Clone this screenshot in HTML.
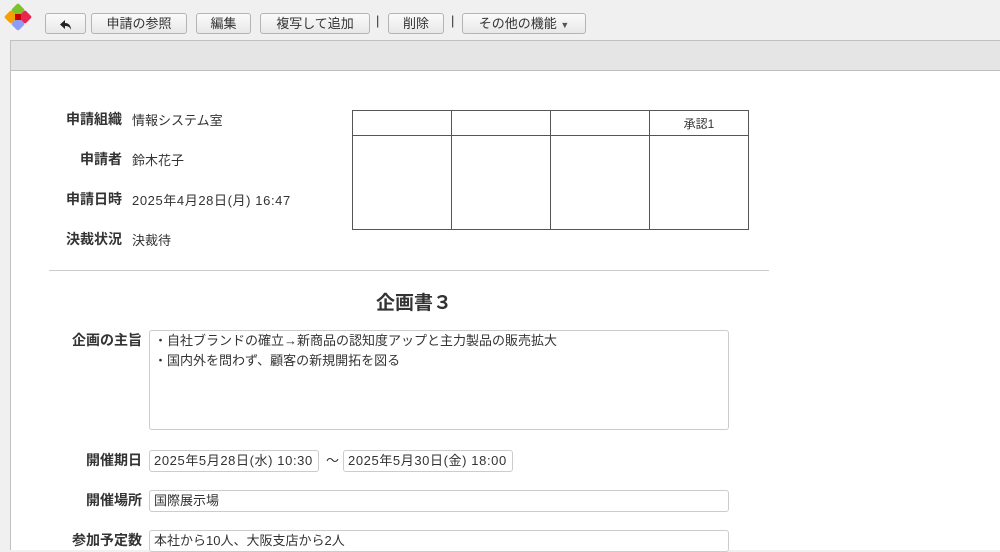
<!DOCTYPE html>
<html><head><meta charset="utf-8"><style>
*{box-sizing:border-box;margin:0;padding:0}
body{width:1000px;height:550px;overflow:hidden;background:#f0f0f0;font-family:"Liberation Sans","Noto Sans CJK JP",sans-serif;font-size:13px;color:#333;position:relative}
.a{position:absolute}
.n{letter-spacing:0.6px}
.btn{position:absolute;top:13px;height:21px;border:1px solid #b4b4b4;border-radius:3px;background:linear-gradient(#fafafa,#e8e8e8);text-align:center;line-height:19px;font-size:13px;color:#333}
.sep{position:absolute;top:13px;font-size:13px;color:#333}
.lbl{position:absolute;font-weight:bold;text-align:right;width:100px;color:#333;font-size:14px}
.box{position:absolute;border:1px solid #ccc;border-radius:3px;background:#fff;padding:0 4px;line-height:20px}
table{position:absolute;left:352px;top:110px;border-collapse:collapse}
td{border:1px solid #555;width:99px;text-align:center;font-size:12px}
</style></head><body>
<svg class="a" style="left:4px;top:3px" width="28" height="28" viewBox="0 0 28 28">
<rect x="9" y="2" width="10" height="10" rx="2" transform="rotate(45 14 7)" fill="#7cc22a"/>
<rect x="2" y="9" width="10" height="10" rx="2" transform="rotate(45 7 14)" fill="#f5a000"/>
<rect x="16" y="9" width="10" height="10" rx="2" transform="rotate(45 21 14)" fill="#e8264f"/>
<rect x="9" y="16" width="10" height="10" rx="2" transform="rotate(45 14 21)" fill="#8e9cf5"/>
<rect x="11" y="11" width="6" height="6" fill="#c00"/></svg>
<div class="btn" style="left:45px;width:41px"><svg width="14" height="12" viewBox="0 0 14 12" style="vertical-align:middle"><path d="M6 1 L1 5.5 L6 10 V7 C9 7 11 8 12 11 C12 7 10 4 6 4 Z" fill="#222"/></svg></div>
<div class="btn" style="left:91px;width:96px">申請の参照</div>
<div class="btn" style="left:196px;width:55px">編集</div>
<div class="btn" style="left:260px;width:110px">複写して追加</div>
<div class="sep" style="left:376px">|</div>
<div class="btn" style="left:388px;width:56px">削除</div>
<div class="sep" style="left:451px">|</div>
<div class="btn" style="left:462px;width:124px">その他の機能 <span style="font-size:9px;color:#555">▼</span></div>
<div class="a" style="left:10px;top:40px;width:990px;height:510px;background:#fff;border-left:1px solid #c0c0c0;border-top:1px solid #c0c0c0"></div>
<div class="a" style="left:11px;top:41px;width:989px;height:30px;background:#e5e5e5;border-bottom:1px solid #c0c0c0"></div>
<div class="lbl" style="left:22px;top:109px">申請組織</div><div class="a" style="left:132px;top:110px">情報システム室</div>
<div class="lbl" style="left:22px;top:149px">申請者</div><div class="a" style="left:132px;top:150px">鈴木花子</div>
<div class="lbl" style="left:22px;top:189px">申請日時</div><div class="a n" style="left:132px;top:190px">2025年4月28日(月) 16:47</div>
<div class="lbl" style="left:22px;top:229px">決裁状況</div><div class="a" style="left:132px;top:230px">決裁待</div>
<table><tr style="height:25px"><td></td><td></td><td></td><td>承認1</td></tr><tr style="height:94px"><td></td><td></td><td></td><td></td></tr></table>
<div class="a" style="left:49px;top:270px;width:720px;height:1px;background:#ccc"></div>
<div class="a" style="left:0;width:828px;top:288px;text-align:center;font-size:19px;font-weight:bold">企画書３</div>
<div class="lbl" style="left:42px;top:330px">企画の主旨</div>
<div class="box" style="left:149px;top:330px;width:580px;height:100px;padding-top:0">・自社ブランドの確立→新商品の認知度アップと主力製品の販売拡大<br>・国内外を問わず、顧客の新規開拓を図る</div>
<div class="lbl" style="left:42px;top:450px">開催期日</div>
<div class="box n" style="left:149px;top:450px;width:170px;height:22px">2025年5月28日(水) 10:30</div>
<div class="a" style="left:326px;top:450px">～</div>
<div class="box n" style="left:343px;top:450px;width:170px;height:22px">2025年5月30日(金) 18:00</div>
<div class="lbl" style="left:42px;top:490px">開催場所</div>
<div class="box" style="left:149px;top:490px;width:580px;height:22px">国際展示場</div>
<div class="lbl" style="left:42px;top:530px">参加予定数</div>
<div class="box" style="left:149px;top:530px;width:580px;height:22px">本社から10人、大阪支店から2人</div>
</body></html>
